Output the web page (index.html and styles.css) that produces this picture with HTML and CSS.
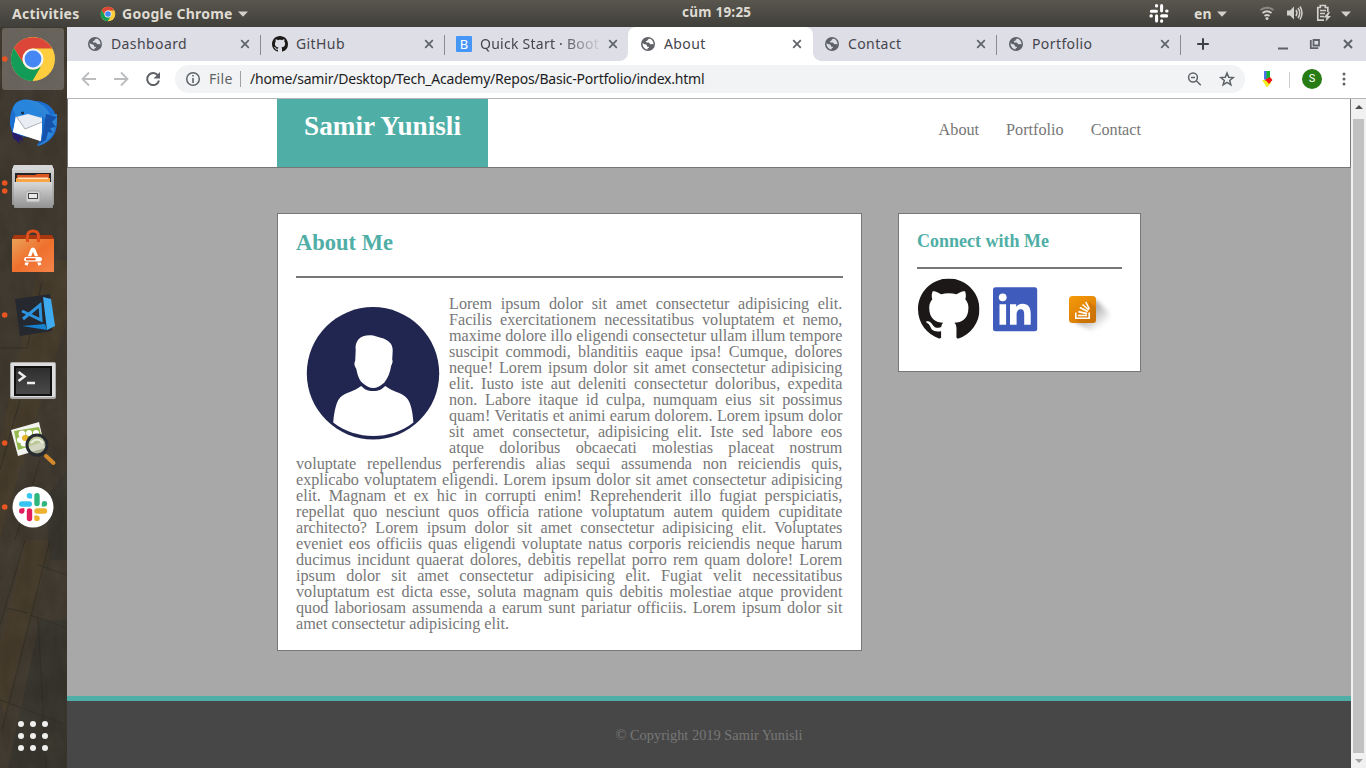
FILE: index.html
```html
<!DOCTYPE html>
<html lang="en">
<head>
<meta charset="utf-8">
<title>About</title>
<link rel="stylesheet" href="styles.css">
</head>
<body>
<svg class="defs" width="0" height="0">
  <symbol id="globe" viewBox="0 0 24 24"><path fill="#5f6368" d="M12 1.500a10.500 10.500 0 1 0 0 21a10.500 10.500 0 0 0 0-21z"/><path fill="var(--tab-bg)" d="M14.500 3.800c-.8 1-2.500.8-3 2 .3 1.500-1.500 1.700-2.500 2.200-.8.800.3 1.700 1.200 1.900 1.600.2 3.700-.2 4.300 1.300.3 1.300 1.600 1.200 2.600 1 1-.5 2.300 0 3.100.7.400-3.700-1.700-7.500-5.700-9.100zM4 10.500c-.7 4.700 2.500 9 7 9.600.3-1.300 1.200-1.600 2.200-2.300.8-1-.3-1.600-1.300-1.600-1.500 0-1.600-1.200-1.700-2.300-.5-1.300-2-1.200-3.200-1.400-1.300-.4-2-1.200-3-2z"/></symbol>
  <symbol id="github" viewBox="0 0 16 16"><path fill="#1b1817" d="M8 0C3.580 0 0 3.580 0 8c0 3.540 2.290 6.530 5.470 7.590.4.070.55-.17.55-.38 0-.19-.01-.82-.01-1.490-2.010.37-2.530-.49-2.690-.94-.09-.23-.48-.94-.82-1.130-.28-.15-.68-.52-.01-.53.63-.01 1.080.58 1.230.82.72 1.210 1.870.87 2.330.66.070-.52.28-.87.51-1.070-1.780-.2-3.640-.89-3.640-3.950 0-.87.31-1.590.82-2.150-.08-.2-.36-1.020.08-2.120 0 0 .67-.21 2.200.82.640-.18 1.320-.27 2-.27s1.360.09 2 .27c1.530-1.040 2.200-.82 2.200-.82.44 1.100.16 1.920.08 2.120.51.56.82 1.270.82 2.150 0 3.070-1.870 3.750-3.650 3.950.29.25.54.73.54 1.480 0 1.070-.01 1.930-.01 2.200 0 .21.15.46.55.38A8.013 8.013 0 0 0 16 8c0-4.420-3.580-8-8-8z"/></symbol>
  <symbol id="chrome" viewBox="0 0 48 48"><circle cx="24" cy="24" r="22" fill="#ffce3f"/><path fill="#dc4638" d="M4.900 13A22 22 0 0 1 43.100 13.500L24 13.500A10.500 10.500 0 0 0 14.900 29.200z"/><path fill="#129c58" d="M4.900 13A22 22 0 0 0 23.500 46L33.100 29.200A10.500 10.500 0 0 1 14.900 29.200z"/><circle cx="24" cy="24" r="10.500" fill="#f5f5f5"/><circle cx="24" cy="24" r="8.400" fill="#4587f4"/></symbol>
  <symbol id="close" viewBox="0 0 10 10"><path d="M1.200 1.200l7.600 7.600M8.800 1.200L1.200 8.800" stroke="#5f6368" stroke-width="1.700"/></symbol>
  <symbol id="caret" viewBox="0 0 10 6"><path d="M0 .5h10L5 5.800z" fill="#d2d0ca"/></symbol>
</svg>

<header class="topbar">
  <span class="activities">Activities</span>
  <svg class="tb-chrome" width="16" height="16"><use href="#chrome"/></svg>
  <span class="appname">Google Chrome</span>
  <svg class="tb-caret" width="10" height="6"><use href="#caret"/></svg>
  <span class="clock">cüm 19:25</span>
  <svg class="tb-status" width="220" height="27" viewBox="1146 0 220 27">
    <g transform="translate(1159 13.200) scale(.67) translate(-33.100 -507)" stroke="#fff" stroke-width="4.600" stroke-linecap="round"><path d="M21.700 504h7.600M29.400 496.200v-.6M37 495.700v7.800M44.500 503.700h.6M37 511h7.500M37 518.300v.6M29.500 511v7.500M21.700 511h-.6"/></g>
    <use href="#caret" x="1217" y="11" width="10" height="6"/>
    <use href="#caret" x="1341" y="11" width="10" height="6"/>
    <g fill="none" stroke-width="1.800"><path d="M1260.500 10q6.500-4.500 13 0" stroke="#8b8982"/><path d="M1262.500 13q4.500-3.500 9 0" stroke="#d2d0ca"/><path d="M1264.500 16q2.500-2 5 0" stroke="#d2d0ca"/></g>
    <circle cx="1267" cy="18.500" r="1.500" fill="#d2d0ca"/>
    <path fill="#d2d0ca" d="M1287 10.500h3l4-4v13l-4-4h-3z"/>
    <path fill="none" stroke="#d2d0ca" stroke-width="1.500" d="M1296 10q2 3 0 6M1298 8q3.500 5 0 10M1300 6.500q4 6.500 0 13"/>
    <path fill="none" stroke="#d2d0ca" stroke-width="1.700" d="M1324 20.200h-6.200V7.500h2.500V5.500h5v2h2.500v4.500M1320 10.500h6M1320 13.500h5M1320 16.500h4"/>
    <path fill="#d2d0ca" d="M1328.500 12l-5 5.500h3l-1 4 5.500-5.500h-3l2-4z"/>
    <text x="1194" y="18.500" class="lang">en</text>
  </svg>
</header>

<div class="desktop">
  <aside class="dock">
    <svg class="wallpaper" width="67" height="741" viewBox="0 27 67 741">
      <defs><filter id="grain" x="0" y="0" width="100%" height="100%"><feTurbulence type="fractalNoise" baseFrequency=".06 .03" numOctaves="4" seed="8"/><feColorMatrix values="0 0 0 0 .4  0 0 0 0 .34  0 0 0 0 .22  .55 0 0 0 -.14"/></filter></defs>
      <rect y="27" width="67" height="741" fill="#3b352c"/>
      <path fill="#473b28" d="M25 540h27L5 715 0 700V640zM40 260h27v60L20 470 0 540V440z" opacity=".6"/>
      <path fill="#33312a" d="M40 620h27v148H8zM45 500l22-30v90H50z"/>
      <path fill="none" stroke="#2f2c24" d="M25 540L0 625M50 540L2 730M38 618l8 150M7 608l20 5M30 615l37 13M38 565l29 10M0 348h27l15-66M20 400L0 470M40 460L15 540M0 700l67 25"/>
      <rect y="27" width="67" height="741" filter="url(#grain)" opacity=".25"/>
    </svg>
    <svg width="67" height="64" viewBox="0 27 67 64"><rect x="2" y="28" width="62" height="62" rx="3" fill="#8b8984" fill-opacity=".55"/><circle cx="4.700" cy="59" r="2.800" fill="#e95420"/><use href="#chrome" x="9" y="35" width="48" height="48"/></svg>
    <svg width="67" height="64" viewBox="0 91 67 64">
      <path fill="#1b6fd0" d="M10 125C9 110 15 102 20 101c4-3 10-1 14 0 13 0 23 8 23 22 0 12-8 21-20 23l4-7-28-4z"/>
      <path fill="#2e86d8" d="M20 101c9-4 25 1 30 14l7-1c1 16-6 28-20 32l5-9 3-18-7-9-14-7z"/>
      <path fill="#1553ad" d="M46 114l-4 23-4 8 8-5 2-8 5 1-3-5 6-1-4-5 5-5z"/>
      <path fill="#291c6b" d="M12 132l10 4 1 6-4-3 1 5-7-6z"/>
      <path fill="#e9edf3" d="M16 116l9-3 17 3v16l-2 9-27-9z"/><path fill="#fff" d="M16 116l9 13 17-8-1 20-28-9z"/><path fill="none" stroke="#aab0ba" d="M16 116l9 13 17-7"/>
      <path fill="#2786dc" d="M13 109c1-8 10-11 16-7 9 3 12 10 13 16l-14-4-12 3z"/><circle cx="22.500" cy="113" r="1.500" fill="#162841"/>
    </svg>
    <svg width="67" height="64" viewBox="0 155 67 64"><defs><linearGradient id="metal" x2="0" y2="1"><stop stop-color="#d8d8d8"/><stop offset="1" stop-color="#929292"/></linearGradient></defs>
      <circle cx="4.700" cy="183" r="2.800" fill="#e95420"/><circle cx="4.700" cy="191" r="2.800" fill="#e95420"/>
      <path fill="url(#metal)" d="M14 165h38l2 5v35H12v-35z"/><path fill="#d7d7d7" d="M14 165h38l2 5H12z"/><path fill="#252525" d="M15 173h36v10H15z"/><path fill="#db5620" d="M17 175h18l2-1h12v8H17z"/><path fill="#f9a445" d="M16 178h34v5H16z"/><path fill="#ffe4bd" d="M18 177.500h30v1.500H18z"/>
      <path fill="url(#metal)" d="M14 182h38l1 25q0 1-1 1H15q-1 0-1-1z"/><rect x="26" y="191" width="14" height="11" rx="2" fill="#d5d5d5" stroke="#aaa"/><rect x="28.500" y="193.500" width="9" height="5" fill="#e9e9e9" stroke="#444"/>
    </svg>
    <svg width="67" height="64" viewBox="0 219 67 64"><defs><linearGradient id="bag" x2="1" y2="1"><stop stop-color="#e9a15a"/><stop offset=".5" stop-color="#ef702c"/><stop offset="1" stop-color="#f5854b"/></linearGradient></defs>
      <path fill="#a93810" d="M14 235h38l2 4H12z"/><path fill="url(#bag)" d="M12 239h42v33H12z"/><path fill="none" stroke="#e0501d" stroke-width="3" d="M27.500 242v-6q0-5 5.500-5t5.500 5v6"/>
      <path fill="none" stroke="#fff" stroke-width="3.200" d="M26 265.200l6-15.200q1-2 2 0l6 15.200"/><rect x="23.500" y="256.300" width="19" height="6.200" rx="3" fill="#ee7233"/><rect x="24" y="257" width="18" height="4.600" rx="2.300" fill="#fff"/><path d="M26 259.300h9.500" stroke="#e95b20" stroke-width="2"/>
    </svg>
    <svg width="67" height="64" viewBox="0 283 67 64"><circle cx="4.700" cy="315" r="2.800" fill="#e95420"/>
      <path fill="#25282e" d="M15 299l35-5 2 37-32 5z"/><path fill="#3eaaf0" d="M43 297l8 2 4 27-8 4z"/><path fill="#1682cf" d="M22 326l23-2 2 6z"/><path fill="none" stroke="#2e93dd" stroke-width="3" d="M23 319l17-14 1 15-19-9"/>
    </svg>
    <svg width="67" height="64" viewBox="0 347 67 64"><defs><linearGradient id="screen" x2="0" y2="1"><stop stop-color="#2e2e2e"/><stop offset="1" stop-color="#4a4a4a"/></linearGradient></defs>
      <rect x="10" y="362" width="46" height="37" rx="2" fill="#aaa"/><rect x="11" y="363" width="44" height="34" rx="1" fill="#ddd"/><rect x="14" y="366" width="38" height="30" fill="#111"/><rect x="16" y="368" width="34" height="26" fill="url(#screen)"/><path fill="none" stroke="#eee" stroke-width="2.500" d="M18.500 372l6 4.500-6 4.500M27 383h8"/>
    </svg>
    <svg width="67" height="64" viewBox="0 411 67 64"><circle cx="4.700" cy="443" r="2.800" fill="#e95420"/>
      <path fill="#f2f2ee" d="M11 430l28-8 6 26-27 8z"/><path fill="#93b84b" d="M14 431l25-4 4 15-25 8z"/><g fill="#fff"><circle cx="22" cy="434" r="3.500"/><circle cx="29" cy="433" r="3"/><circle cx="20" cy="440" r="3"/><circle cx="24" cy="443" r="3.500"/><circle cx="36" cy="433" r="3"/></g><circle cx="25" cy="438" r="3" fill="#e9b52b"/>
      <circle cx="37" cy="445" r="10" fill="#c8ccb0" fill-opacity=".75" stroke="#272b30" stroke-width="3"/><path d="M31 443q6-7 12 0" fill="none" stroke="#fff" stroke-width="2" opacity=".7"/><path d="M46 456l7.500 7" stroke="#d48a2c" stroke-width="4" stroke-linecap="round"/>
    </svg>
    <svg width="67" height="64" viewBox="0 475 67 64"><circle cx="4.700" cy="507" r="2.800" fill="#e95420"/><circle cx="33" cy="507" r="20.500" fill="#fff"/>
      <g stroke-width="5.400" stroke-linecap="round"><path stroke="#36c5f0" d="M21.700 504h7.600M29.400 495.700h.1"/><path stroke="#2eb67d" d="M37 495.700v7.800M44.500 503.700v.1"/><path stroke="#ecb22e" d="M37 511h7.500M37 518.300v.1"/><path stroke="#e01e5a" d="M29.500 511v7.500M21.700 511v.1"/></g><path fill="#36c5f0" d="M29.400 493v5.400h2.700v-2.700z"/><path fill="#2eb67d" d="M41.800 503.700v2.700h2.700z"/><path fill="#ecb22e" d="M34.300 518.300v-2.700H37z"/><path fill="#e01e5a" d="M24.400 511v-2.700h-2.700z"/>
    </svg>
    <svg class="apps" width="67" height="64" viewBox="0 704 67 64"><g fill="#f0f0ee"><circle cx="21" cy="724" r="3"/><circle cx="33" cy="724" r="3"/><circle cx="45" cy="724" r="3"/><circle cx="21" cy="736" r="3"/><circle cx="33" cy="736" r="3"/><circle cx="45" cy="736" r="3"/><circle cx="21" cy="748" r="3"/><circle cx="33" cy="748" r="3"/><circle cx="45" cy="748" r="3"/></g></svg>
  </aside>

  <div class="window">
    <div class="tabs">
      <div class="tab first"><svg class="fav"><use href="#globe"/></svg><span class="title">Dashboard</span><svg class="x"><use href="#close"/></svg></div>
      <div class="tab"><svg class="fav"><use href="#github"/></svg><span class="title">GitHub</span><svg class="x"><use href="#close"/></svg></div>
      <div class="tab nosep"><span class="fav boot">B</span><span class="title fade">Quick Start · Boot</span><svg class="x"><use href="#close"/></svg></div>
      <div class="tab active"><svg class="fav"><use href="#globe"/></svg><span class="title">About</span><svg class="x"><use href="#close"/></svg></div>
      <div class="tab"><svg class="fav"><use href="#globe"/></svg><span class="title">Contact</span><svg class="x"><use href="#close"/></svg></div>
      <div class="tab"><svg class="fav"><use href="#globe"/></svg><span class="title">Portfolio</span><svg class="x"><use href="#close"/></svg></div>
      <svg class="controls" width="186" height="34" viewBox="1180 27 186 34"><path d="M1203 38.200v11.600M1197.200 44h11.600" stroke="#3c4043" stroke-width="2"/><path d="M1278 48.500h10" stroke="#5f6368" stroke-width="2"/><path fill="none" stroke="#5f6368" stroke-width="1.800" d="M1313.500 40h5.500v5.500h-5.500zM1310.800 40v8.200h7.500"/><path d="M1344 40l8 8M1352 40l-8 8" stroke="#5f6368" stroke-width="2"/></svg>
    </div>
    <div class="toolbar">
      <svg class="nav-icons" width="108" height="37" viewBox="67 61 108 37"><g fill="none" stroke-width="1.800"><path stroke="#babcbe" d="M96 79H83M89 72.500L82.500 79l6.500 6.500M114 79h13M121 72.500l6.500 6.500-6.500 6.500"/><path stroke="#5f6368" stroke-width="2" d="M158.200 75.800a6 6 0 1 0 .8 4.700"/></g><path fill="#5f6368" d="M160 72v6.500h-6.500z"/></svg>
      <div class="omnibox">
        <svg width="16" height="16" viewBox="0 0 16 16"><circle cx="8" cy="8" r="6.300" fill="none" stroke="#5f6368" stroke-width="1.500"/><path d="M8 7v5M8 4v1.600" stroke="#5f6368" stroke-width="1.600"/></svg>
        <span class="scheme">File</span><i class="bar"></i><span class="url">/home/samir/Desktop/Tech_Academy/Repos/Basic-Portfolio/index.html</span>
        <svg class="omni-icons" width="52" height="28" viewBox="1184 65 52 28"><g fill="none" stroke="#5f6368" stroke-width="1.500"><circle cx="1193" cy="77.500" r="4.400"/><path d="M1196.300 80.800l4.500 4.500M1191 77.500h4"/><path d="M1227 73l1.700 4.200 4.500.3-3.500 2.900 1.200 4.400-3.900-2.400-3.900 2.400 1.200-4.400-3.500-2.900 4.500-.3z"/></g></svg>
      </div>
      <svg class="ext" width="40" height="37" viewBox="1247 61 40 37"><path fill="#4c74e8" d="M1264 71h3v8.500h-3z"/><path fill="#12b42f" d="M1266.500 71h3.500v7l-3.500 1z"/><path fill="#f2ef1e" d="M1262 80h5l4 3-4 4.500z"/><path fill="#f21414" d="M1264.500 80l5.500-3 2.500 3-3.500 4-2.500-3z"/></svg>
      <i class="bar"></i><span class="avatar">S</span>
      <svg class="dots" width="12" height="16" viewBox="0 0 12 16"><g fill="#5f6368"><circle cx="6" cy="3" r="1.500"/><circle cx="6" cy="8" r="1.500"/><circle cx="6" cy="13" r="1.500"/></g></svg>
    </div>

    <div class="viewport">
      <div class="page">
        <header class="site-header">
          <h1>Samir Yunisli</h1>
          <nav><a>About</a><a>Portfolio</a><a>Contact</a></nav>
        </header>
        <main>
          <section class="card about">
            <h2>About Me</h2>
            <svg class="portrait" width="153" height="153" viewBox="296 296 153 153"><circle cx="373" cy="373.300" r="66.200" fill="#212651"/><path fill="#fff" d="M355.700 350c-1-9 4-14.500 14-14.700 5 0 7 1.500 11 2.500 8 2 12 6 12 13l-.5 9c1 1 0 4-1 6-1 6-3 12-7 17-8 7-14 7-22 0-4-4-5-10-6-14-2-3-2.300-6-1-8z"/><path fill="#fff" d="M333.200 422.500c1-11 3-21 7-25 5-5 14-6 21-11.500 3 3 6 5 12 5s9-2 12-5c7 5.500 16 6.500 21 11.500 5 5 6.500 15 7.200 25-23 18-57 18-80.200 0z"/></svg>
            <p>Lorem ipsum dolor sit amet consectetur adipisicing elit. Facilis exercitationem necessitatibus voluptatem et nemo, maxime dolore illo eligendi consectetur ullam illum tempore suscipit commodi, blanditiis eaque ipsa! Cumque, dolores neque! Lorem ipsum dolor sit amet consectetur adipisicing elit. Iusto iste aut deleniti consectetur doloribus, expedita non. Labore itaque id culpa, numquam eius sit possimus quam! Veritatis et animi earum dolorem. Lorem ipsum dolor sit amet consectetur, adipisicing elit. Iste sed labore eos atque doloribus obcaecati molestias placeat nostrum voluptate repellendus perferendis alias sequi assumenda non reiciendis quis, explicabo voluptatem eligendi. Lorem ipsum dolor sit amet consectetur adipisicing elit. Magnam et ex hic in corrupti enim! Reprehenderit illo fugiat perspiciatis, repellat quo nesciunt quos officia ratione voluptatum autem quidem cupiditate architecto? Lorem ipsum dolor sit amet consectetur adipisicing elit. Voluptates eveniet eos officiis quas eligendi voluptate natus corporis reiciendis neque harum ducimus incidunt quaerat dolores, debitis repellat porro rem quam dolore! Lorem ipsum dolor sit amet consectetur adipisicing elit. Fugiat velit necessitatibus voluptatum est dicta esse, soluta magnam quis debitis molestiae atque provident quod laboriosam assumenda a earum sunt pariatur officiis. Lorem ipsum dolor sit amet consectetur adipisicing elit.</p>
          </section>
          <section class="card connect">
            <h3>Connect with Me</h3>
            <svg width="205" height="70" viewBox="917 274 205 70">
              <defs><linearGradient id="so" x2=".6" y2="1"><stop stop-color="#f49a09"/><stop offset="1" stop-color="#d97a06"/></linearGradient><linearGradient id="shade" x2="1" y2="1"><stop offset=".45" stop-color="#888"/><stop offset=".85" stop-color="#fff"/></linearGradient><filter id="soft" x="-30%" y="-30%" width="160%" height="160%"><feGaussianBlur stdDeviation="2"/></filter></defs>
              <use href="#github" x="918" y="278.500" width="61.500" height="61.500"/>
              <rect x="993" y="287.300" width="44.200" height="44" rx="2.500" fill="#3f5bbb"/><g fill="#fff"><circle cx="1002.700" cy="297.300" r="3.900"/><path d="M999.500 304.200h6.600v20.500h-6.600zM1010 304.200h6.200v2.800c1-2 3.200-3.300 6.200-3.300 6.200 0 8.300 4 8.300 10v11h-6.500v-10c0-3.300-.7-5.500-3.500-5.500s-4.100 2-4.100 5.500v10h-6.600z"/></g>
              <path d="M1073 321l22-22 13 13q3 4-1 9-7 8-17 9z" fill="url(#shade)" filter="url(#soft)" opacity=".65"/>
              <rect x="1069" y="296" width="27" height="27" rx="3.500" fill="url(#so)"/><path fill="#bd6b07" opacity=".5" d="M1089 301l7 7v12q0 3-3 3h-13l-5-4 16-2z"/>
              <path fill="none" stroke="#fff" stroke-width="1.600" d="M1075.800 312.500v5.700h13.400v-5.700M1078 315.500h9M1078.400 311.600l8.700 2M1079.800 307.500l8 4M1082.500 304.500l6.300 5.500M1085.800 302l3.500 7"/>
            </svg>
          </section>
        </main>
        <footer>© Copyright 2019 Samir Yunisli</footer>
      </div>
      <div class="scrollbar"><i class="up"></i><i class="thumb"></i><i class="down"></i></div>
    </div>
  </div>
</div>
</body>
</html>
```
FILE: styles.css
```css
* { box-sizing: border-box; }
body { margin: 0; width: 1366px; height: 768px; overflow: hidden; display: flex; flex-direction: column; font-family: "Noto Sans", sans-serif; }
svg { display: block; flex: none; }
.defs { position: absolute; }

.topbar { position: relative; height: 27px; flex: none; display: flex; align-items: center; padding-left: 12px; background: linear-gradient(#59564e, #403f3a); color: #dfdbd2; font-weight: 700; font-size: 14px; letter-spacing: .25px; line-height: 27px; white-space: nowrap; }
.activities { width: 88px; }
.tb-chrome { margin-right: 6px; }
.appname { width: 110px; }
.tb-caret { margin-left: 6px; }
.clock { position: absolute; left: 682px; top: -1px; font-size: 13.5px; }
.tb-status { margin-left: auto; }
.lang { font-size: 14px; font-weight: 700; fill: #dfdbd2; }

.desktop { flex: 1; display: flex; min-height: 0; }
.dock { position: relative; width: 67px; flex: none; display: flex; flex-direction: column; background: #3a352b; }
.dock svg { position: relative; }
.dock .wallpaper { position: absolute; left: 0; top: 0; }
.dock .apps { margin-top: auto; }

.window { flex: 1; min-width: 0; display: flex; flex-direction: column; background: #fff; }
.tabs { display: flex; height: 34px; flex: none; padding-left: 9px; background: #dedee6; --tab-bg: #dedee6; }
.tab { position: relative; width: 184px; display: flex; align-items: center; padding: 0 10px 0 12px; color: #45454d; font-size: 14px; letter-spacing: .4px; }
.tab.first { padding-left: 11px; }
.tab:not(.active):not(.nosep)::after { content: ""; position: absolute; right: -1px; top: 8px; width: 1px; height: 20px; background: #8b8c91; }
.tab.active { --tab-bg: #fff; background: #fff; border-radius: 8px 8px 0 0; width: 185px; margin-right: -1px; padding-right: 11px; }
.tab.active::before, .tab.active::after { content: ""; position: absolute; bottom: 0; width: 8px; height: 8px; z-index: 1; }
.tab.active::before { left: -8px; background: radial-gradient(circle at 0 0, transparent 7.500px, #fff 8px); }
.tab.active::after { right: -8px; background: radial-gradient(circle at 100% 0, transparent 7.500px, #fff 8px); }
.fav { width: 16px; height: 16px; margin-right: 8px; flex: none; }
.boot { background: #4696f5; color: #fff; font-size: 13px; line-height: 16px; text-align: center; border-radius: 1px; letter-spacing: 0; }
.title { flex: 1; min-width: 0; white-space: nowrap; line-height: 20px; }
.fade { letter-spacing: .25px; -webkit-mask-image: linear-gradient(90deg, #000 80px, transparent 124px); mask-image: linear-gradient(90deg, #000 80px, transparent 124px); }
.x { width: 10px; height: 10px; margin-left: 8px; }

.toolbar { height: 38px; flex: none; display: flex; align-items: center; border-bottom: 1px solid #b5b4b6; }
.omnibox { width: 1070px; height: 28px; margin-bottom: 1px; border-radius: 14px; background: #f1f3f4; display: flex; align-items: center; padding: 0 9px 0 10px; font-size: 14px; color: #5f6368; white-space: nowrap; }
.omnibox .scheme { margin-left: 8px; width: 31px; padding-bottom: 1px; letter-spacing: .3px; }
.bar { width: 1px; height: 16px; background: #9fa1a4; flex: none; }
.url { margin-left: 9px; padding-bottom: 1px; color: #1d1d1f; letter-spacing: -.215px; }
.omni-icons { margin-left: auto; }
.ext { margin-left: 2px; }
.toolbar > .bar { margin-left: 2px; background: #c9cacc; }
.avatar { width: 20px; height: 20px; margin: 0 0 2px 12px; border-radius: 50%; background: #277c14; color: #fff; font: 11px/20px Roboto, sans-serif; text-align: center; }
.dots { margin: 0 0 1px 16px; }

.viewport { flex: 1; min-height: 0; display: flex; }
.page { flex: 1; display: flex; flex-direction: column; background: #a8a8a8; font-family: "Liberation Serif", serif; font-size: 16.2px; line-height: 16px; color: #777; }
.site-header { height: 69px; display: flex; justify-content: space-between; padding: 0 209px; background: #fff; border: 1px solid #777; border-top: 0; }
h1 { margin: 0; width: 211px; height: 68px; background: #4faea6; color: #fff; font-size: 27.2px; line-height: 54px; text-align: center; }
nav { display: flex; gap: 27px; padding-top: 23px; }
main { flex: 1; display: flex; justify-content: space-between; align-items: flex-start; padding: 45px 210px 0; }
.card { background: #fff; border: 1px solid #777; padding: 0 18px; }
.about { width: 585px; height: 438px; }
.connect { width: 243px; height: 159px; }
h2, h3 { margin: 0; color: #4faea6; border-bottom: 2px solid #777; }
h2 { height: 64px; font-size: 22.5px; line-height: 57px; margin-bottom: 18px; }
h3 { height: 55px; font-size: 18px; line-height: 54px; margin-bottom: 5px; }
.portrait { float: left; }
p { margin: 0 .6px 0 0; text-align: justify; }
footer { height: 72px; border-top: 5px solid #4faea6; background: #474747; color: #777; font-size: 14.4px; line-height: 68px; text-align: center; }

.scrollbar { width: 15px; display: flex; flex-direction: column; align-items: center; background: #f1f1f1; padding: 6px 0 5px; }
.scrollbar .up, .scrollbar .down { width: 0; height: 0; border: 4px solid transparent; }
.scrollbar .up { border-top: 0; border-bottom-color: #505050; margin-bottom: 10px; }
.scrollbar .thumb { width: 11px; flex: 1; background: #c1c1c1; }
.scrollbar .down { border-bottom: 0; border-top-color: #a3a3a3; margin-top: 6px; }
```
